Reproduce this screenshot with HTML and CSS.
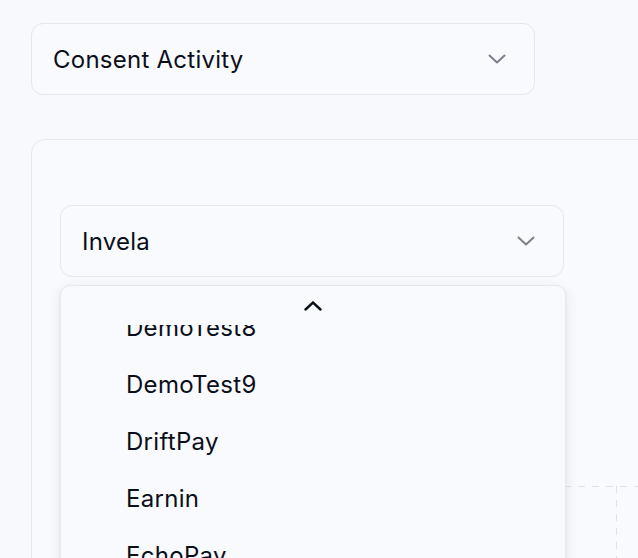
FILE: index.html
```html
<!DOCTYPE html>
<html lang="en">
<head>
<meta charset="utf-8">
<title>Consent Activity</title>
<link rel="stylesheet" href="styles.css">
</head>
<body>
<div class="page">
  <div class="select select-top">
    <span class="select-value">Consent Activity</span>
    <svg class="chev" width="18" height="10" viewBox="0 0 18 10"><polyline points="1.5,1.5 9,8.5 16.5,1.5"/></svg>
  </div>

  <section class="card">
    <div class="picker">
      <div class="select">
        <span class="select-value">Invela</span>
        <svg class="chev" width="18" height="10" viewBox="0 0 18 10"><polyline points="1.5,1.5 9,8.5 16.5,1.5"/></svg>
      </div>

      <div class="menu">
        <div class="scroll-up">
          <svg width="18" height="10" viewBox="0 0 18 10"><polyline points="1.5,8.5 9,1.5 16.5,8.5"/></svg>
        </div>
        <div class="viewport">
          <ul class="items">
            <li class="item">DemoTest8</li>
            <li class="item">DemoTest9</li>
            <li class="item">DriftPay</li>
            <li class="item">Earnin</li>
            <li class="item">EchoPay</li>
          </ul>
        </div>
      </div>
    </div>

    <svg class="chart" width="640" height="140" viewBox="0 0 640 140">
      <line x1="0" y1="0.5" x2="640" y2="0.5" class="grid"/>
      <line x1="556.5" y1="0" x2="556.5" y2="140" class="grid"/>
    </svg>
  </section>
</div>
</body>
</html>
```

FILE: styles.css
```css
* { box-sizing: border-box; }

html, body {
  margin: 0;
  padding: 0;
  background: #f8f9fc;
  overflow: hidden;
}

body {
  font-family: Inter, "Noto Sans", "Liberation Sans", sans-serif;
  color: #0f172a;
  width: 638px;
  height: 558px;
}

.page {
  padding: 23px 0 0 31px;
}

.select {
  width: 504px;
  height: 72px;
  border: 1px solid #e4e7ee;
  border-radius: 12px;
  background: #f9fafd;
  display: flex;
  align-items: center;
  justify-content: space-between;
  padding: 0 28px 0 21px;
}

.select-value {
  font-size: 24px;
  line-height: 30px;
  font-weight: 400;
  color: #0b0f1a;
  padding-top: 1px;
  letter-spacing: 0.25px;
}

.select .select-value + .chev { flex: none; }

.chev polyline {
  fill: none;
  stroke: #7c808a;
  stroke-width: 2;
  stroke-linecap: round;
  stroke-linejoin: round;
}

.card {
  margin-top: 44px;
  width: 660px;
  height: 460px;
  border: 1px solid #e6e8ee;
  border-radius: 14px;
  background: #f9fafd;
  padding: 65px 0 0 28px;
}

.picker {
  position: relative;
  width: 504px;
}

.menu {
  position: absolute;
  top: 80px;
  left: 0;
  width: 506px;
  height: 300px;
  background: #f9fafd;
  border: 1px solid #e6e8ee;
  border-radius: 10px;
  box-shadow: 0 4px 14px rgba(15, 23, 42, 0.09), 0 1px 3px rgba(15, 23, 42, 0.05);
  z-index: 2;
  overflow: hidden;
}

.scroll-up {
  height: 39px;
  display: flex;
  justify-content: center;
  padding-top: 15px;
}

.scroll-up polyline {
  fill: none;
  stroke: #0b0f1a;
  stroke-width: 2.4;
  stroke-linecap: round;
  stroke-linejoin: miter;
}

.viewport {
  overflow: hidden;
  height: 260px;
}

.items {
  list-style: none;
  margin: -26px 0 0;
  padding: 0;
}

.item {
  height: 57px;
  line-height: 57px;
  font-size: 24px;
  padding-left: 65px;
  color: #0b0f1a;
  letter-spacing: 0.3px;
}

.chart {
  display: block;
  margin-top: 209px;
  margin-left: 0;
}

.chart .grid {
  stroke: #dfe2e8;
  stroke-width: 1;
  stroke-dasharray: 7 7;
}
```
